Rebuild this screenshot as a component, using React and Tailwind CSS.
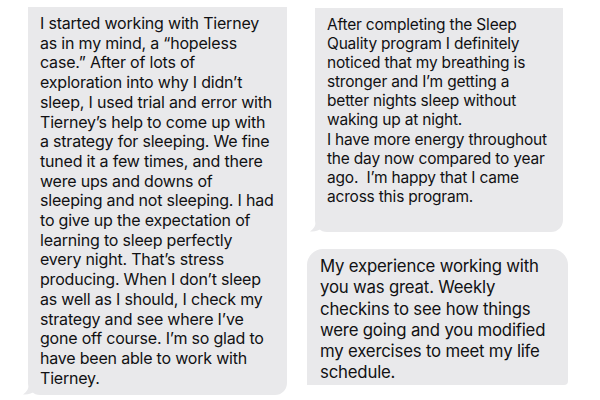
const left = [
  "I started working with Tierney",
  "as in my mind, a \u201chopeless",
  "case.\u201d After of lots of",
  "exploration into why I didn\u2019t",
  "sleep, I used trial and error with",
  "Tierney\u2019s help to come up with",
  "a strategy for sleeping. We fine",
  "tuned it a few times, and there",
  "were ups and downs of",
  "sleeping and not sleeping. I had",
  "to give up the expectation of",
  "learning to sleep perfectly",
  "every night. That\u2019s stress",
  "producing. When I don\u2019t sleep",
  "as well as I should, I check my",
  "strategy and see where I\u2019ve",
  "gone off course. I\u2019m so glad to",
  "have been able to work with",
  "Tierney.",
];

const topRight = [
  "After completing the Sleep",
  "Quality program I definitely",
  "noticed that my breathing is",
  "stronger and I\u2019m getting a",
  "better nights sleep without",
  "waking up at night.",
  "I have more energy throughout",
  "the day now compared to year",
  "ago.\u00a0 I\u2019m happy that I came",
  "across this program.",
];

const bottomRight = [
  "My experience working with",
  "you was great. Weekly",
  "checkins to see how things",
  "were going and you modified",
  "my exercises to meet my life",
  "schedule.",
];

const Tail = () => (
  <svg
    className="absolute -left-[5px] bottom-0"
    width="14"
    height="12"
    viewBox="0 0 14 12"
  >
    <path d="M6 0 C6 5 4 9 0 11.5 C5 12 9 10.5 12 8 L12 0 Z" fill="#e9e9eb" />
  </svg>
);

const Lines = ({ lines }) =>
  lines.map((line) => (
    <div className="whitespace-nowrap" key={line}>
      {line}
    </div>
  ));

export default function App() {
  return (
    <div
      className="flex h-[400px] w-[600px] items-start overflow-hidden bg-white pl-[28px] pt-[7px] text-[#111113]"
      style={{ fontFamily: "Inter, 'Liberation Sans', sans-serif" }}
    >
      <div className="relative h-[388px] w-[259px] rounded-b-[12px] bg-[#e9e9eb] pl-[12px] pt-[7px] text-[16px] leading-[19.7px] tracking-[-0.2px]">
        <Lines lines={left} />
        <Tail />
      </div>

      <div className="ml-[28px] flex flex-col">
        <div className="relative mt-[1px] h-[224px] w-[248px] rounded-b-[12px] bg-[#e9e9eb] pl-[12px] pt-[7px] text-[15.5px] leading-[19.1px] tracking-[-0.2px]">
          <Lines lines={topRight} />
          <Tail />
        </div>
        <div className="-ml-[8px] mt-[17px] h-[136px] w-[261px] rounded-t-[16px] rounded-br-[4px] bg-[#e9e9eb] pl-[13px] pt-[7px] text-[16.8px] leading-[21.3px] tracking-[-0.2px]">
          <Lines lines={bottomRight} />
        </div>
      </div>
    </div>
  );
}
